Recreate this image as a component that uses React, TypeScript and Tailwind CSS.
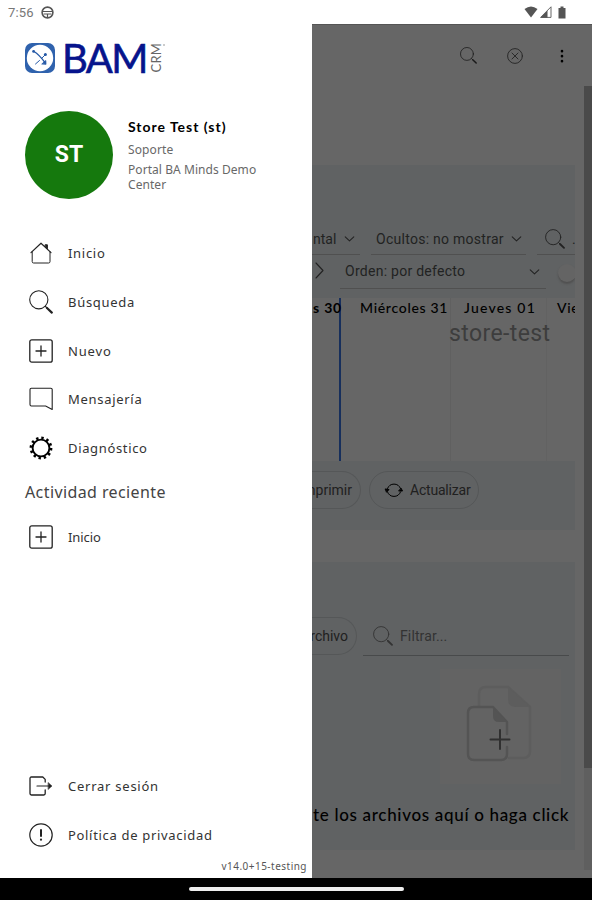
import type { ReactNode } from "react";
import clsx from "clsx";

function Svg({ className, box = "0 0 24 24", children }: { className?: string; box?: string; children: ReactNode }) {
  return (
    <svg
      viewBox={box}
      className={clsx("shrink-0", className)}
      fill="none"
      stroke="currentColor"
      strokeLinecap="round"
      strokeLinejoin="round"
    >
      {children}
    </svg>
  );
}

function SearchIcon({ className }: { className?: string }) {
  return (
    <Svg className={className}>
      <circle cx="9.8" cy="9.8" r="9.1" strokeWidth="1.1" />
      <path d="M16.4 16.4 L18 18" strokeWidth="1.2" />
      <path d="M18 18 L22.8 22.6" strokeWidth="2.2" />
    </Svg>
  );
}

function HomeIcon() {
  return (
    <Svg className="size-6">
      <path d="M2 11.6 L12 2.2 L22 11.6" strokeWidth="1.2" />
      <path d="M16.4 3.8 H18.4 V7.8 L16.4 6 Z" fill="currentColor" strokeWidth="1" />
      <path d="M3.2 10.8 V20.6 Q3.2 22 4.6 22 H19.6 Q21 22 21 20.6 V10.8" strokeWidth="1" />
    </Svg>
  );
}

function PlusBoxIcon() {
  return (
    <Svg className="size-6">
      <rect x="0.8" y="0.8" width="22.4" height="22.4" rx="2" strokeWidth="1.3" />
      <path d="M12 7 V17 M7 12 H17" strokeWidth="1.3" />
    </Svg>
  );
}

function MessageIcon() {
  return (
    <Svg className="size-6">
      <path d="M23.2 22.4 V2.6 Q23.2 1.2 21.8 1.2 H2.4 Q1 1.2 1 2.6 V17.6 Q1 19 2.4 19 H16.6 Z" strokeWidth="1.1" />
    </Svg>
  );
}

function GearIcon() {
  return (
    <Svg className="size-6 text-black">
      <circle cx="12" cy="12" r="8.4" strokeWidth="1.9" />
      <circle cx="12" cy="12" r="10" strokeWidth="2.8" strokeDasharray="2.4 2.836" strokeLinecap="butt" />
    </Svg>
  );
}

function LogoutIcon() {
  return (
    <Svg className="size-6">
      <path d="M16.2 8 V5.4 L13.8 3 H2.4 Q1 3 1 4.4 V19.6 Q1 21 2.4 21 H14.8 Q16.2 21 16.2 19.6 V16" strokeWidth="1.3" />
      <path d="M8 12 H22" strokeWidth="1.2" />
      <path d="M19.4 8.8 L22.8 12 L19.4 15.2 Z" fill="currentColor" strokeWidth="0.6" />
    </Svg>
  );
}

function AlertIcon() {
  return (
    <Svg className="size-6">
      <circle cx="12" cy="12" r="11.2" strokeWidth="1.2" />
      <path d="M12 7 V13" strokeWidth="2" />
      <path d="M12 16.6 V16.8" strokeWidth="2.1" />
    </Svg>
  );
}

function Chevron() {
  return (
    <Svg className="h-[6px] w-[11px]" box="0 0 12 7">
      <path d="M1 1 L6 5.8 L11 1" strokeWidth="1.2" />
    </Svg>
  );
}

function MenuItem({ icon, label, className }: { icon: ReactNode; label: string; className?: string }) {
  return (
    <a className="flex h-[48.7px] items-center gap-[15px] pl-[29px]">
      {icon}
      <span className={clsx("whitespace-nowrap text-[13px] leading-5 text-[#333]", className)}>{label}</span>
    </a>
  );
}

function Logo() {
  return (
    <div className="flex h-[34px] items-center pl-[25px]">
      <Svg className="size-[30px] text-[#2458a6]" box="0 0 30 30">
        <rect x="0" y="0" width="30" height="30" rx="7" fill="#2f62ad" stroke="none" />
        <circle cx="15" cy="15" r="13.2" fill="#fff" stroke="none" />
        <path d="M9 8.500 Q14 11.500 20 19.500" strokeWidth="1.3" />
        <path d="M20 12 L16.500 15.500 M14.500 17.500 L10.500 21" strokeWidth="1" />
        <path d="M17 20.800 L20.800 17.500 L21 21 Z" fill="#2458a6" strokeWidth="0.8" />
        <circle cx="8.6" cy="8.4" r="1.4" fill="#2458a6" stroke="none" />
        <circle cx="20.4" cy="11.4" r="1.5" fill="#2458a6" stroke="none" />
      </Svg>
      <span className="ml-[6px] w-[88px] whitespace-nowrap pl-[1px] font-['Lato'] text-[40px] leading-[34px] tracking-[-1.6px] text-[#06148c] [-webkit-text-stroke:0.6px_#06148c]">
        BAM
      </span>
      <span className="ml-[1px] rotate-180 font-['Lato'] text-[13px] leading-[13px] tracking-[0.2px] text-[#666] [writing-mode:vertical-rl]">
        CRM
      </span>
      <span className="mb-[26px] size-[2px] rounded-full bg-[#bbb]" />
    </div>
  );
}

function Drawer() {
  return (
    <aside className="flex w-[312px] shrink-0 flex-col bg-white pt-[17px] font-['Noto_Sans',sans-serif] text-[#222]">
      <Logo />
      <div className="mt-[36px] flex h-[88px] gap-[15px] pl-[25px]">
        <div className="flex size-[88px] items-center justify-center rounded-full bg-[#15790d] font-['Roboto'] text-[23px] font-bold text-white">
          ST
        </div>
        <div className="flex flex-col pt-[7px] text-[12px] text-[#686868]">
          <span className="whitespace-nowrap font-['Lato'] text-[14px] leading-[18px] font-bold tracking-[0.98px] text-black">
            Store Test (st)
          </span>
          <span className="mt-[5px] leading-[18px] tracking-[0.1px]">Soporte</span>
          <span className="mt-[4px] w-[140px] leading-[14.5px] tracking-[0.06px]">Portal BA Minds Demo Center</span>
        </div>
      </div>
      <nav className="mt-[30px] flex flex-col">
        <MenuItem icon={<HomeIcon />} label="Inicio" className="tracking-[0.7px]" />
        <MenuItem icon={<SearchIcon className="size-6" />} label="Búsqueda" className="tracking-[0.7px]" />
        <MenuItem icon={<PlusBoxIcon />} label="Nuevo" className="tracking-[0.85px]" />
        <MenuItem icon={<MessageIcon />} label="Mensajería" className="tracking-[0.7px]" />
        <MenuItem icon={<GearIcon />} label="Diagnóstico" className="tracking-[0.65px]" />
      </nav>
      <h2 className="mt-[8px] pl-[25px] text-[16px] leading-[24px] tracking-[0.4px] text-[#444]">Actividad reciente</h2>
      <div className="mt-[8px]">
        <MenuItem icon={<PlusBoxIcon />} label="Inicio" className="tracking-[-0.1px]" />
      </div>
      <div className="mt-auto flex flex-col">
        <MenuItem icon={<LogoutIcon />} label="Cerrar sesión" className="tracking-[0.75px]" />
        <MenuItem icon={<AlertIcon />} label="Política de privacidad" className="tracking-[0.68px]" />
      </div>
      <span className="h-[19px] pr-[5px] text-right text-[10px] leading-[15px] tracking-[0.48px] text-[#555]">
        v14.0+15-testing
      </span>
    </aside>
  );
}

function StatusBar() {
  return (
    <header className="flex h-6 shrink-0 items-center bg-white pr-[26px] pl-[8px] text-[#555]">
      <span className="pt-px font-['Roboto'] text-[13px] tracking-[0.2px] text-[#777]">7:56</span>
      <Svg className="ml-[7px] size-[13px]" box="0 0 13 13">
        <circle cx="6.5" cy="6.5" r="5.4" strokeWidth="1.6" />
        <path d="M1.5 5.5 H11.5 M3 8 H10 M6.5 8 V11.5" strokeWidth="1.2" />
      </Svg>
      <Svg className="ml-auto h-[12px] w-[14px]" box="0 0 14 12">
        <path d="M0.5 3 Q7 -2 13.5 3 L7 11.5 Z" fill="currentColor" stroke="none" />
      </Svg>
      <Svg className="ml-[2px] size-[12px]" box="0 0 12 12">
        <path d="M1 11.4 H11 V1.2 Z" strokeWidth="0.9" />
        <path d="M0.5 11.8 H7.5 V4.5 Z" fill="currentColor" stroke="none" />
      </Svg>
      <Svg className="ml-[6px] h-[13px] w-[8px]" box="0 0 8 13">
        <path d="M2.5 0.5 H5.5 V2 H7.5 V12.5 H0.5 V2 H2.5 Z" fill="currentColor" stroke="none" />
      </Svg>
    </header>
  );
}

function Toolbar() {
  return (
    <div className="flex h-[61px] shrink-0 items-center pl-[148px] text-[#1a1a1a]">
      <SearchIcon className="size-[17px]" />
      <Svg className="ml-[30px] size-[16px] text-[#2a2a2a]" box="0 0 16 16">
        <circle cx="8" cy="8" r="7.4" strokeWidth="1" />
        <path d="M5 5 L11 11 M11 5 L5 11" strokeWidth="1" />
      </Svg>
      <Svg className="ml-[37px] h-[14px] w-[4px] text-black" box="0 0 4 14">
        <path d="M2 2 V2.2 M2 7 V7.2 M2 12 V12.2" strokeWidth="2.6" />
      </Svg>
    </div>
  );
}

function CalendarPanel() {
  return (
    <section className="flex h-[365px] w-[263px] shrink-0 flex-col overflow-hidden bg-[#606263] pt-[59px] font-['Roboto'] text-[14px] whitespace-nowrap">
      <div className="flex h-[31px] gap-[11px]">
        <div className="flex w-[48px] shrink-0 items-center gap-[7px] border-b border-[#505050]">
          <span className="w-[25px] pl-px">ntal</span>
          <Chevron />
        </div>
        <div className="flex w-[155px] shrink-0 items-center justify-between border-b border-[#505050] pr-[4px] pl-[5px]">
          <span className="tracking-[0.27px]">Ocultos: no mostrar</span>
          <Chevron />
        </div>
        <div className="flex w-[38px] shrink-0 items-center gap-[7px] border-b border-[#505050] pl-[8px]">
          <SearchIcon className="size-[20px]" />
          <span className="w-[3px]">.</span>
        </div>
      </div>
      <div className="flex h-[34px]">
        <Svg className="mt-[7px] ml-[3px] h-[17px] w-[9px]" box="0 0 9 17">
          <path d="M1 1 L8 8.5 L1 16" strokeWidth="1.1" />
        </Svg>
        <div className="ml-[16px] flex w-[206px] shrink-0 items-center justify-between border-b border-[#505050] pr-[6px] pl-[5px]">
          <span className="tracking-[0.27px]">Orden: por defecto</span>
          <Chevron />
        </div>
        <div className="mt-[9px] ml-[12px] size-[18px] shrink-0 rounded-full bg-[#646464] shadow-[0_2px_2px_#505050]" />
      </div>
      <div className="mt-[9px] flex h-[163px] w-[263px] shrink-0 bg-[#666] font-['Lato'] text-[14px] leading-[20px] tracking-[0.6px] text-black">
        <div className="w-[29px] border-r-2 border-[#172f5c]">
          <span className="pl-px font-bold tracking-[0.8px]">s 30</span>
        </div>
        <div className="flex w-[110px] flex-col border-r border-[#606060] pl-[19px] font-medium">
          <span className="tracking-[0.7px]">Miércoles 31</span>
        </div>
        <div className="w-[96px] border-r border-[#626262]">
          <div className="pl-[13px] font-medium tracking-[1.2px]">Jueves 01</div>
          <div className="-ml-[2px] pt-[2px] font-['Roboto'] text-[23px] leading-[28px] tracking-[0.4px] text-[#3d3d3d]">
            store-test
          </div>
        </div>
        <span className="w-[28px] overflow-hidden pl-[10px] font-medium">Vie</span>
      </div>
      <div className="mt-[10px] flex gap-[8px] text-[#202020]">
        <button className="flex h-[38px] w-[49px] items-center justify-end rounded-r-full border border-l-0 border-[#555758] pr-[8px]">
          nprimir
        </button>
        <button className="flex h-[38px] w-[110px] items-center rounded-full border border-[#555758] pl-[14px]">
          <Svg className="h-[18px] w-[20px] text-black" box="0 0 20 18">
            <path d="M3.500 7.500 A7 7 0 0 1 16.500 7.500 M16.500 11 A7 7 0 0 1 3.500 11" strokeWidth="1" />
            <path d="M1.500 8 L5 8.500 L2.800 11 Z M15 10 L18.500 10 L17.200 7.500 Z" fill="currentColor" strokeWidth="1" />
          </Svg>
          <span className="ml-[6px] tracking-[-0.2px]">Actualizar</span>
        </button>
      </div>
    </section>
  );
}

function FilesPanel() {
  return (
    <section className="mt-[32px] flex h-[288px] w-[263px] shrink-0 flex-col overflow-hidden bg-[#606263] pt-[55px] font-['Roboto'] text-[14px] whitespace-nowrap">
      <div className="flex h-[39px] items-start">
        <div className="flex h-[38px] w-[45px] shrink-0 items-center justify-end rounded-r-full border border-l-0 border-[#555758] pr-[8px] text-[#202020]">
          rchivo
        </div>
        <div className="ml-[6px] flex h-[39px] w-[206px] items-center border-b border-[#484a4b] pl-[10px] text-[#333]">
          <SearchIcon className="size-[20px]" />
          <span className="ml-[7px] tracking-[0.12px]">Filtrar...</span>
        </div>
      </div>
      <div className="mt-[13px] ml-[128px] flex h-[115px] w-[121px] bg-[#636363] pt-[16px] pl-[22px]">
        <Svg className="h-[80px] w-[74px]" box="0 0 74 80">
          <path d="M17 21 V9 Q17 2 24 2 H46 L68 22 V66 Q68 73 61 73 H47" stroke="#5d5d5d" strokeWidth="2.5" />
          <path d="M46 2 V14 Q46 22 54 22 H68 Z" fill="#5d5d5d" stroke="none" />
          <path d="M45 49 V37 L31 22 H12 Q6 22 6 28 V69 Q6 75 12 75 H39 Q45 75 45 69 V62" stroke="#545454" strokeWidth="2.5" />
          <path d="M31 22 V31 Q31 37 37 37 H45 Z" fill="#545454" stroke="none" />
          <path d="M38 45 V64 M28.500 54.500 H47.500" stroke="#303030" strokeWidth="2" />
        </Svg>
      </div>
      <p className="mt-[19px] pl-px font-['Lato'] text-[17px] leading-[24px] font-medium tracking-[0.68px] text-black">
        te los archivos aquí o haga click
      </p>
    </section>
  );
}

export default function App() {
  return (
    <div className="flex h-[900px] w-[592px] flex-col overflow-hidden bg-white">
      <StatusBar />
      <div className="flex h-[854px] shrink-0">
        <Drawer />
        <main className="flex w-[280px] flex-col border-t border-[#555] bg-[#666] text-[#222]">
          <Toolbar />
          <div className="flex h-[784px]">
            <div className="flex w-[272px] shrink-0 flex-col pt-[79px]">
              <CalendarPanel />
              <FilesPanel />
            </div>
            <div className="h-[784px] w-[8px] bg-[#5f5f5f]">
              <div className="h-[682px] bg-[#4a4a4a]" />
            </div>
          </div>
        </main>
      </div>
      <footer className="flex h-[22px] shrink-0 items-center justify-center bg-black">
        <div className="h-[4px] w-[215px] rounded-full bg-[#eee]" />
      </footer>
    </div>
  );
}
